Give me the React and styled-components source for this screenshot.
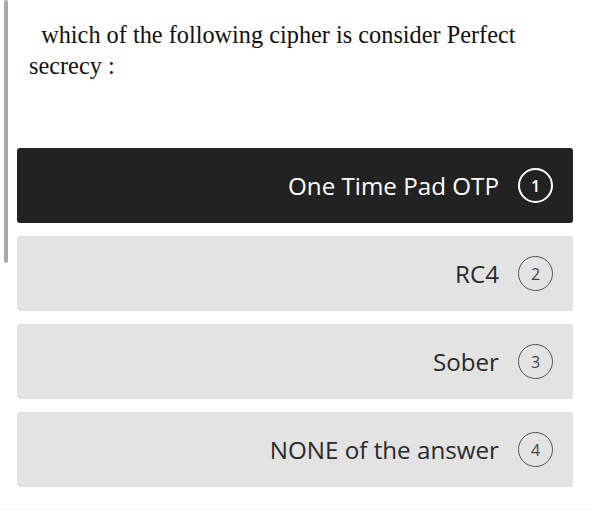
import styled, { createGlobalStyle } from "styled-components";

const GlobalStyle = createGlobalStyle`
  html, body {
    margin: 0;
    padding: 0;
    background: #ffffff;
  }
`;

// page
const Page = styled.div`
  position: relative;
  width: 591px;
  height: 510px;
  box-sizing: border-box;
  padding: 0 18px 0 17px;
  display: flex;
  flex-direction: column;
  overflow: hidden;
  border-bottom: 1px solid #f1f1f1;
`;

// scrollbar overlay at the left edge
const ScrollThumb = styled.div`
  position: absolute;
  left: 4px;
  top: 0;
  width: 4px;
  height: 263px;
  border-radius: 2px;
  background: #a9a9a9;
`;

// question
const Question = styled.p`
  margin: 0;
  padding: 19px 0 0 12px;
  font-family: "Liberation Serif", "Times New Roman", serif;
  font-size: 24.3px;
  line-height: 31px;
  color: #111;
  white-space: pre-wrap;
  height: 148px;
  box-sizing: border-box;
`;

// answers
const AnswerList = styled.div`
  display: flex;
  flex-direction: column;
  gap: 13px;
`;

const Answer = styled.div`
  height: 75px;
  border-radius: 3px;
  display: flex;
  align-items: center;
  justify-content: flex-end;
  gap: 19px;
  padding-right: 20px;
  background: ${(p) => (p.$selected ? "#222222" : "#e3e3e3")};
  color: ${(p) => (p.$selected ? "#ffffff" : "#2a2a2a")};
  font-family: "Open Sans", "Noto Sans", sans-serif;
  font-size: 24.2px;
`;

const Badge = styled.span`
  width: 35px;
  height: 35px;
  box-sizing: border-box;
  border-radius: 50%;
  border: ${(p) => (p.$selected ? "2px solid #ffffff" : "1.5px solid #555")};
  display: flex;
  align-items: center;
  justify-content: center;
  font-size: 16px;
  font-weight: ${(p) => (p.$selected ? 600 : 400)};
  color: ${(p) => (p.$selected ? "#ffffff" : "#444")};
`;

const answers = [
  { text: "One Time Pad OTP", selected: true },
  { text: "RC4" },
  { text: "Sober" },
  { text: "NONE of the answer" },
];

export default function App() {
  return (
    <>
      <GlobalStyle />
      <Page>
        <ScrollThumb />
        <Question>
          {"  which of the following cipher is consider Perfect\nsecrecy :"}
        </Question>
        <AnswerList>
          {answers.map((a, i) => (
            <Answer key={i} $selected={a.selected}>
              <span>{a.text}</span>
              <Badge $selected={a.selected}>{i + 1}</Badge>
            </Answer>
          ))}
        </AnswerList>
      </Page>
    </>
  );
}
